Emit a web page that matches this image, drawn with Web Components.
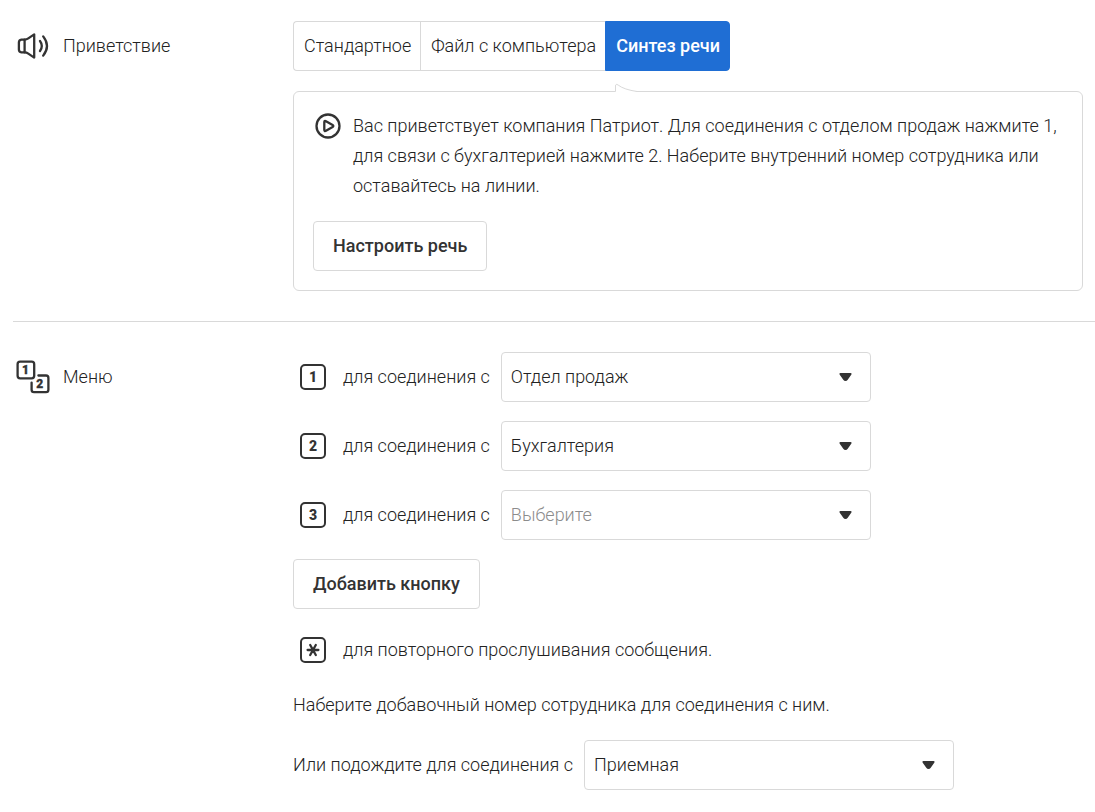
<!DOCTYPE html>
<html lang="ru">
<head>
<meta charset="utf-8">
<meta name="viewport" content="width=device-width, initial-scale=1">
<title>Голосовое меню</title>
<style>
  :root { --ink: #333; --line: #d9d9d9; --accent: #1f6ed4; --muted: #8c8c8c; }
  *, *::before, *::after { box-sizing: border-box; }
  body { margin: 0; background: #fff; color: #222; font: 300 18px/30px Roboto, "Open Sans", sans-serif; }
  main { padding-left: 13px; }
</style>
</head>
<body>
<main>
  <settings-section label="Приветствие">
    <svg slot="icon" width="34" height="34" viewBox="0 0 34 34" fill="none" stroke="#333" stroke-width="2.3" stroke-linecap="round" stroke-linejoin="round" aria-hidden="true">
      <path d="M8.6 10.6H5.4Q2.9 11 2.9 13.4V20.6Q2.9 23 5.4 23.4H8.6Z"/>
      <path d="M8.6 10.6Q10.6 10.6 12.3 9.4L18.2 5.4V28.6L12.3 24.6Q10.6 23.4 8.6 23.4"/>
      <path d="M24 12Q27.6 17 24 22M27.2 7.4Q34.8 17 27.2 26.6"/>
    </svg>
    <segment-group legend="Приветствие" options="Стандартное|Файл с компьютера|Синтез речи" selected="2"></segment-group>
    <speech-panel>
      Вас приветствует компания Патриот. Для соединения с отделом продаж нажмите 1, для связи с бухгалтерией нажмите 2. Наберите внутренний номер сотрудника или оставайтесь на линии.
      <outline-button slot="action">Настроить речь</outline-button>
    </speech-panel>
  </settings-section>

  <settings-section label="Меню" divided>
    <svg slot="icon" width="34" height="34" viewBox="0 0 34 34" fill="none" stroke="#333" stroke-width="2.3" stroke-linecap="round" aria-hidden="true">
      <rect x="1.6" y="1.7" width="16.6" height="16.6" rx="2.5"/>
      <path d="M22.4 15.5H30Q32.4 15.5 32.4 17.9V29.7Q32.4 32.1 30 32.1H18Q15.6 32.1 15.6 29.7V22.6"/>
      <g fill="#333" stroke="#333" stroke-width=".3" font-family="Roboto, sans-serif" font-size="12" font-weight="900" text-anchor="middle">
        <text x="9.6" y="14">1</text><text x="23.7" y="28">2</text>
      </g>
    </svg>
    <menu-rows>
      <select-field label="для соединения с" options="Отдел продаж|Бухгалтерия|Приемная" value="Отдел продаж"><key-cap slot="key">1</key-cap></select-field>
      <select-field label="для соединения с" options="Отдел продаж|Бухгалтерия|Приемная" value="Бухгалтерия"><key-cap slot="key">2</key-cap></select-field>
      <select-field label="для соединения с" options="Выберите|Отдел продаж|Бухгалтерия|Приемная" value="Выберите" placeholder><key-cap slot="key">3</key-cap></select-field>
      <outline-button>Добавить кнопку</outline-button>
    </menu-rows>
    <menu-notes>
      <key-note>
        <key-cap slot="key"><svg width="14" height="14" viewBox="0 0 14 14" fill="none" stroke="#333" stroke-width="2.3" stroke-linecap="round" aria-hidden="true"><path d="M1.6 7H12.4M4.2 2L9.8 12M9.8 2L4.2 12"/></svg></key-cap>
        для повторного прослушивания сообщения.
      </key-note>
      <key-note>Наберите добавочный номер сотрудника для соединения с ним.</key-note>
    </menu-notes>
    <select-field label="Или подождите для соединения с" options="Приемная|Отдел продаж|Бухгалтерия" value="Приемная"></select-field>
  </settings-section>
</main>

<script>
  const base = '*, *::before, *::after { box-sizing: border-box; }';

  class Base extends HTMLElement {
    connectedCallback() {
      if (this.shadowRoot) return;
      this.attachShadow({ mode: 'open' }).innerHTML = `<style>${base}${this.css()}</style>${this.html()}`;
      this.ready();
    }
    list() { return (this.getAttribute('options') || '').split('|'); }
    css() { return ''; }
    html() { return '<slot></slot>'; }
    ready() {}
  }

  class SettingsSection extends Base {
    css() { return `
      :host { display: block; padding: 21px 12px 30px 0; }
      :host([divided]) { border-top: 1px solid var(--line); padding-top: 30px; padding-bottom: 20px; }
      section { display: grid; grid-template-columns: 280px minmax(0, 1fr); align-items: start; }
      h2 { display: flex; align-items: center; gap: 13px; height: 50px; margin: 0; padding-left: 3px; font: inherit; }
      .content { display: flex; flex-direction: column; gap: 20px; }
      ::slotted(svg) { flex: none; }`; }
    html() { return `<section><h2><slot name="icon"></slot>${this.getAttribute('label')}</h2><div class="content"><slot></slot></div></section>`; }
  }

  class SegmentGroup extends Base {
    css() { return `
      :host { display: block; }
      fieldset { display: flex; width: fit-content; margin: 0; padding: 0; border: 0; }
      label { position: relative; display: flex; align-items: center; height: 50px; padding: 0 9px 0 10px; border: 1px solid var(--line); border-right-width: 0; cursor: pointer; }
      label:first-of-type { border-radius: 4px 0 0 4px; }
      label:last-of-type { border-right-width: 1px; border-radius: 0 4px 4px 0; }
      label:has(:checked) { background: var(--accent); border-color: var(--accent); color: #fff; font-weight: 500; }
      label:focus-within:has(:focus-visible) { outline: 2px solid var(--accent); outline-offset: 2px; }
      input { position: absolute; inset: 0; width: 100%; height: 100%; margin: 0; opacity: 0; cursor: pointer; }`; }
    html() {
      const on = Number(this.getAttribute('selected'));
      return `<fieldset aria-label="${this.getAttribute('legend')}">${this.list().map((t, i) =>
        `<label><input type="radio" name="segment"${i === on ? ' checked' : ''}>${t}</label>`).join('')}</fieldset>`;
    }
  }

  class SpeechPanel extends Base {
    css() { return `
      :host { position: relative; display: flex; flex-direction: column; align-items: flex-start; gap: 20px; padding: 19px; border: 1px solid var(--line); border-radius: 6px; }
      .tip { position: absolute; left: 321px; top: -9px; }
      .message { display: flex; gap: 10px; }
      p { margin: 0; }
      button { flex: none; display: flex; align-items: center; justify-content: center; width: 30px; height: 30px; padding: 0; border: 0; background: none; cursor: pointer; }`; }
    html() { return `
      <svg class="tip" width="24" height="10" viewBox="0 0 24 10" aria-hidden="true">
        <path d="M.5 10V3Q.5 .3 3.2 2.1Q9 6.6 22 8.5V10Z" fill="#fff"/>
        <path d="M.5 8.5V3Q.5 .3 3.2 2.1Q9 6.6 22 8.5" fill="none" stroke="#d9d9d9"/>
      </svg>
      <div class="message">
        <button type="button" aria-label="Прослушать"><svg width="26" height="26" viewBox="0 0 26 26" fill="none" stroke="#333" stroke-width="2.3" stroke-linejoin="round"><circle cx="13" cy="13" r="11.5"/><path d="M9.3 9.3Q9.3 7.3 11 8.2L17.6 12Q19.1 13 17.6 14L11 17.8Q9.3 18.7 9.3 16.7Z"/></svg></button>
        <p><slot></slot></p>
      </div>
      <slot name="action"></slot>`; }
  }

  class OutlineButton extends Base {
    css() { return `
      :host { display: block; width: fit-content; }
      button { height: 50px; padding: 0 19px; border: 1px solid var(--line); border-radius: 4px; background: #fff; color: var(--ink); font: inherit; font-weight: 500; cursor: pointer; }`; }
    html() { return '<button type="button"><slot></slot></button>'; }
  }

  class KeyCap extends Base {
    css() { return `
      :host { flex: none; display: flex; align-items: center; justify-content: center; width: 26px; height: 26px; margin: 0 17px 0 7px; border: 2px solid var(--ink); border-radius: 5px; color: var(--ink); font-size: 14px; line-height: 22px; font-weight: 900; }`; }
  }

  class SelectField extends Base {
    css() { return `
      :host { display: flex; align-items: center; }
      label { margin-right: 11px; }
      .box { position: relative; flex: 0 1 370px; min-width: 0; }
      select { display: block; width: 100%; height: 50px; padding: 0 50px 0 9px; border: 1px solid var(--line); border-radius: 4px; background: #fff; color: inherit; font: inherit; appearance: none; }
      :host([placeholder]) select { color: var(--muted); }
      svg { position: absolute; right: 19px; top: 21px; pointer-events: none; }`; }
    html() {
      const value = this.getAttribute('value');
      return `<slot name="key"></slot><label for="target">${this.getAttribute('label')}</label>
      <div class="box"><select id="target">${this.list().map(t => `<option${t === value ? ' selected' : ''}>${t}</option>`).join('')}</select>
      <svg width="13" height="8" viewBox="0 0 14 8" preserveAspectRatio="none" aria-hidden="true"><path d="M1.6 0H12.4Q14.2 .2 13.2 1.8L9.4 6.8Q8.5 8 7 8Q5.5 8 4.6 6.8L.8 1.8Q-.2 .2 1.6 0Z" fill="#333"/></svg></div>`;
    }
    ready() {
      this.shadowRoot.querySelector('select').addEventListener('change', e =>
        this.toggleAttribute('placeholder', e.target.value === 'Выберите'));
    }
  }

  class MenuRows extends Base {
    css() { return ':host { display: flex; flex-direction: column; gap: 19px; }'; }
  }

  class MenuNotes extends Base {
    css() { return ':host { display: flex; flex-direction: column; gap: 25px; padding-top: 6px; }'; }
  }

  class KeyNote extends Base {
    css() { return ':host { display: flex; align-items: center; } p { margin: 0; }'; }
    html() { return '<slot name="key"></slot><p><slot></slot></p>'; }
  }

  customElements.define('settings-section', SettingsSection);
  customElements.define('segment-group', SegmentGroup);
  customElements.define('speech-panel', SpeechPanel);
  customElements.define('outline-button', OutlineButton);
  customElements.define('key-cap', KeyCap);
  customElements.define('select-field', SelectField);
  customElements.define('menu-rows', MenuRows);
  customElements.define('menu-notes', MenuNotes);
  customElements.define('key-note', KeyNote);
</script>
</body>
</html>
